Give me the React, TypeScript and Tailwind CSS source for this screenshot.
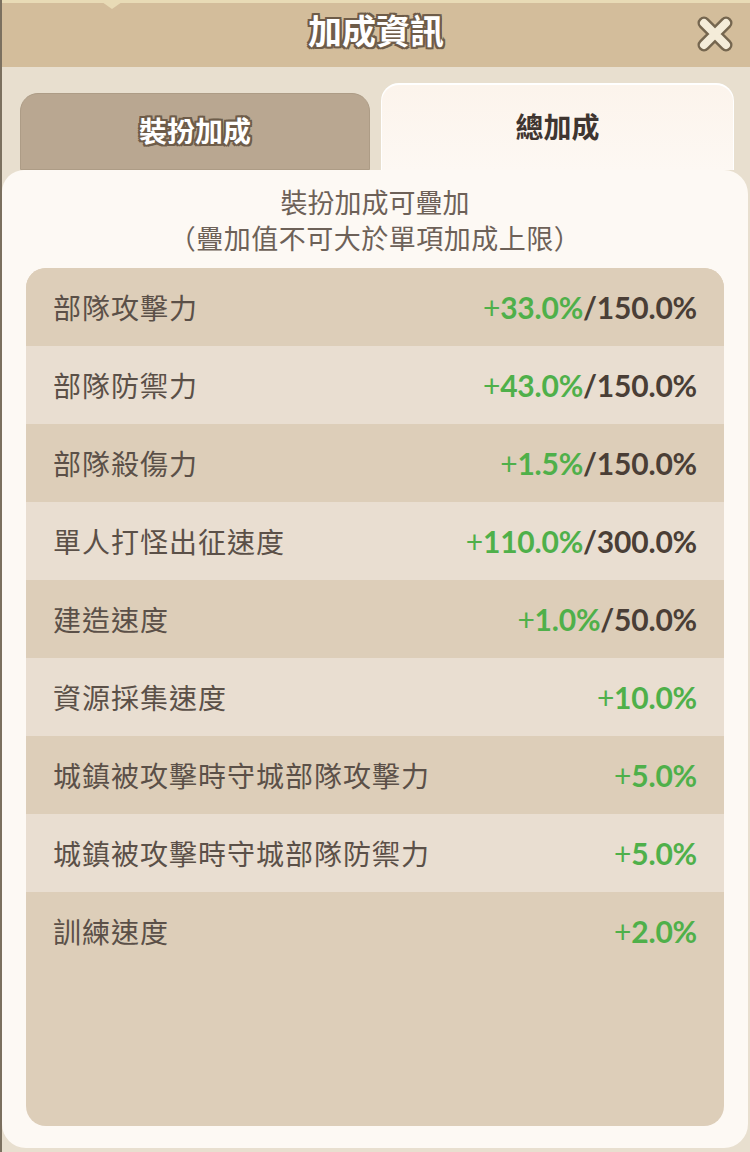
const CJK = "font-['Noto_Sans_CJK_TC','Noto_Sans_CJK_SC',sans-serif]";

type Row = { label: string; value: string; cap?: string };

const ROWS: Row[] = [
  { label: "部隊攻擊力", value: "+33.0%", cap: "/150.0%" },
  { label: "部隊防禦力", value: "+43.0%", cap: "/150.0%" },
  { label: "部隊殺傷力", value: "+1.5%", cap: "/150.0%" },
  { label: "單人打怪出征速度", value: "+110.0%", cap: "/300.0%" },
  { label: "建造速度", value: "+1.0%", cap: "/50.0%" },
  { label: "資源採集速度", value: "+10.0%" },
  { label: "城鎮被攻擊時守城部隊攻擊力", value: "+5.0%" },
  { label: "城鎮被攻擊時守城部隊防禦力", value: "+5.0%" },
  { label: "訓練速度", value: "+2.0%" },
];

const outline =
  "[text-shadow:2px_0_0_#6e5c49,-2px_0_0_#6e5c49,0_2px_0_#6e5c49,0_-2px_0_#6e5c49,2px_2px_0_#6e5c49,-2px_-2px_0_#6e5c49,2px_-2px_0_#6e5c49,-2px_2px_0_#6e5c49]";

function CloseIcon() {
  return (
    <svg width="40" height="40" viewBox="0 0 40 40">
      <g strokeLinecap="round">
        <path d="M9 9 L31 31 M31 9 L9 31" stroke="#75664f" strokeWidth="13" />
        <path d="M9 9 L31 31 M31 9 L9 31" stroke="#f4ecd9" strokeWidth="8" />
      </g>
    </svg>
  );
}

function Value({ value, cap }: { value: string; cap?: string }) {
  return (
    <span className="font-['Lato',sans-serif] text-[30px] font-bold tracking-[-0.2px]">
      <span className="text-[#4fb04a]">
        <span className="font-normal">+</span>
        {value.slice(1)}
      </span>
      {cap && <span className="text-[#4a3e36]">{cap}</span>}
    </span>
  );
}

export default function App() {
  return (
    <div className={`relative flex h-[1152px] w-[750px] flex-col overflow-hidden bg-[#6b6358] ${CJK}`}>
      <div className="flex flex-1 flex-col border-l-2 border-[#7b705f] bg-[#e8dfcf]">
        {/* header */}
        <div className="relative flex h-[67px] items-center justify-center border-t-[3px] border-[#e8dbb6] bg-[#d3bd9b] pb-[10px]">
          <div className="absolute left-[100px] top-[-1px] h-0 w-0 border-x-[10px] border-t-[7px] border-x-transparent border-t-[#e8dbb6]" />
          <span className={`text-[34px] font-bold leading-none text-white ${outline}`}>加成資訊</span>
          <button className="absolute right-[15px] top-[11px]">
            <CloseIcon />
          </button>
        </div>

        {/* tabs */}
        <div className="flex h-[103px] items-end gap-[11px] pl-[18px] pr-[16px]">
          <div className="flex h-[77px] w-[350px] items-start justify-center rounded-t-[18px] border border-[#ad9c86] bg-[#b9a791] pt-[22px]">
            <span className={`text-[28px] font-bold leading-none text-white ${outline}`}>裝扮加成</span>
          </div>
          <div className="flex h-[87px] flex-1 items-start justify-center rounded-t-[18px] border-t-2 border-x border-[#ffffff] bg-gradient-to-b from-[#fcf4ec] to-[#fdf8f3] pt-[27px]">
            <span className="text-[28px] font-bold leading-none text-[#3f3530]">總加成</span>
          </div>
        </div>

        {/* panel */}
        <div className="mr-[2px] mb-[4px] flex flex-1 flex-col rounded-[24px] rounded-tl-[22px] bg-[#fdf9f4] px-[24px] pb-[22px] pt-[14px]">
          <div className="flex flex-col items-center text-[27px] leading-[36px] text-[#6d6158]">
            <div>裝扮加成可疊加</div>
            <div className="tracking-[0.5px]">（疊加值不可大於單項加成上限）</div>
          </div>
          <div className="mt-[12px] flex-1 overflow-hidden rounded-[20px] bg-[#ddceb9]">
            {ROWS.map((r, i) => (
              <div
                key={r.label}
                className={
                  "flex h-[78px] items-center justify-between pl-[27px] pr-[27px] " +
                  (i % 2 === 0 ? "bg-[#ddceb9]" : "bg-[#e9ded1]")
                }
              >
                <span className="text-[28px] leading-none tracking-[1px] text-[#5b5048]">{r.label}</span>
                <Value value={r.value} cap={r.cap} />
              </div>
            ))}
          </div>
        </div>
      </div>
    </div>
  );
}
